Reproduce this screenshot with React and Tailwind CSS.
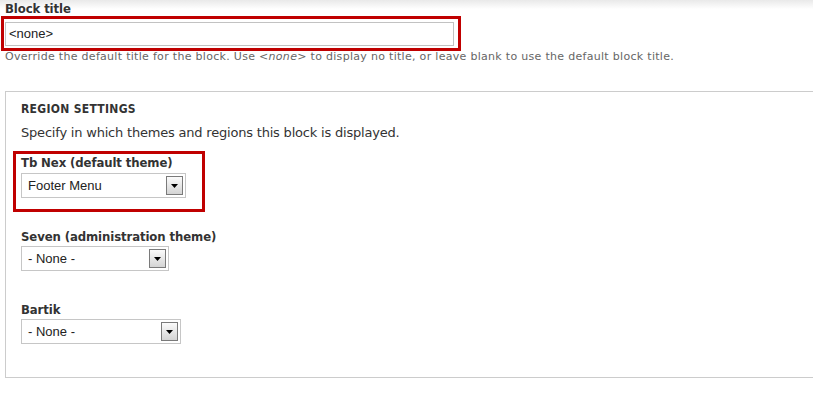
const SelectBox = ({ value, width }) => {
  return (
    <div
      className={`mt-[1px] flex h-[25px] items-center justify-between border border-[#c6c6c6] bg-white pl-[6px] pr-[2px] ${width}`}
    >
      <span className="font-['Liberation_Sans',Arial,sans-serif] text-[13px] leading-none text-[#222]">
        {value}
      </span>
      <span className="flex h-[19px] w-[17px] items-center justify-center border border-[#7a7a7a] bg-gradient-to-b from-[#fbfbfb] to-[#d4d4d4]">
        <svg width="7" height="4" viewBox="0 0 7 4">
          <path d="M0 0h7L3.5 4z" fill="#000" />
        </svg>
      </span>
    </div>
  )
}

// bold labels: condensed face comes closest to the narrow Lucida bold
const Label = ({ children, className = '' }) => (
  <div
    className={`font-['DejaVu_Sans_Condensed','DejaVu_Sans',sans-serif] text-[13px] font-bold leading-[16px] tracking-[-0.1px] text-[#333] ${className}`}
  >
    {children}
  </div>
)

export default function App() {
  return (
    <div className="h-[404px] w-[813px] overflow-hidden bg-white bg-[linear-gradient(to_bottom,#e9e9e9_0px,#ffffff_9px)] font-['DejaVu_Sans',Verdana,sans-serif] text-[#333]">
      <div className="pl-[5px] pt-[1px]">
        <Label>Block title</Label>
      </div>

      <div className="ml-[1px] mt-[-1px] w-[460px] border-[3px] border-[#c00000] pb-[2px] pl-[1px] pt-[3px]">
        <div className="flex h-[24px] w-[449px] items-center border border-[#c2c2c2] bg-white pl-[3px] font-['Liberation_Sans',Arial,sans-serif] text-[13px] text-[#222]">
          &lt;none&gt;
        </div>
      </div>

      <p className="mt-[-1px] pl-[5px] text-[11px] leading-[14px] tracking-[0.3px] text-[#666]">
        Override the default title for the block. Use <em>&lt;none&gt;</em> to display no title, or leave blank to use the default block title.
      </p>

      <div className="ml-[5px] mt-[27px] h-[287px] w-[840px] border border-[#cccccc] pl-[15px] pt-[9px]">
        <h2 className="font-['DejaVu_Sans_Condensed','DejaVu_Sans',sans-serif] text-[12px] font-bold uppercase leading-[16px] tracking-[0.3px] text-[#333]">
          Region settings
        </h2>
        <p className="mt-[8px] text-[13px] leading-[16px] tracking-[-0.2px] text-[#333]">
          Specify in which themes and regions this block is displayed.
        </p>

        <div className="ml-[-8px] mt-[10px] w-[192px] border-[3px] border-[#c00000] pb-[11px] pl-[5px] pt-[1px]">
          <Label>Tb Nex (default theme)</Label>
          <div className="mt-[2px]">
            <SelectBox value="Footer Menu" width="w-[165px]" />
          </div>
        </div>

        <Label className="mt-[17px]">Seven (administration theme)</Label>
        <SelectBox value="- None -" width="w-[148px]" />

        <Label className="mt-[31px]">Bartik</Label>
        <SelectBox value="- None -" width="w-[160px]" />
      </div>
    </div>
  )
}
